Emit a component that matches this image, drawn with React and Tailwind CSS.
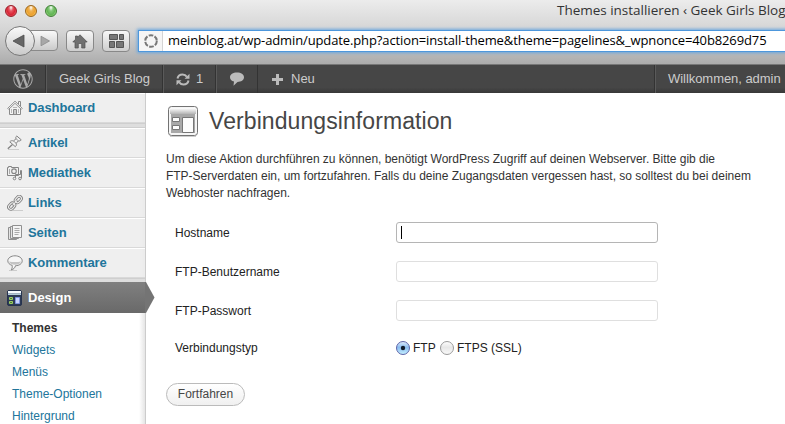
import React from "react";
import { FaWordpressSimple } from "react-icons/fa";

function HouseIcon() {
  return (
    <svg width="16" height="16" viewBox="0 0 16 16" fill="#f4f4f4" stroke="#8a8a8a">
      <path d="M2.500 8v6.500h11V8" />
      <path d="M11.500 4V1.500h2V6" />
      <path d="M.7 8.300 8 1.200l7.300 7.100-1 1L8 3.300 1.700 9.300z" strokeWidth=".9" />
      <path d="M6.500 14V9.500h3V14" fill="#ccc" />
      <path d="M4.500 9v4M11.500 9v4M6 7.500h4" strokeWidth=".8" stroke="#aaa" />
    </svg>
  );
}

function PinIcon() {
  return (
    <svg width="16" height="16" viewBox="0 0 16 16" fill="#f2f2f2" stroke="#808080">
      <path d="M1 14.500h11" stroke="#ccc" />
      <path d="M.8 13.800 5.500 9.500" strokeWidth="1.300" />
      <path d="M2.800 6.800c1-1.200 2.400-1.400 3.700-.8L9 3.700c-.5-1.200-.2-2 .8-2.700l4.400 3.800c-.8 1.200-1.700 1.400-2.800 1L9.200 8.300c.5 1.400.2 2.500-.9 3.400z" />
      <path d="m6.500 6 2.700 2.300M9 3.700l2.400 2.100" strokeWidth=".8" />
    </svg>
  );
}

function MediaIcon() {
  return (
    <svg width="16" height="16" viewBox="0 0 16 16" fill="#f0f0f0" stroke="#858585">
      <path d="M.5 2.500h1v-1h3v1h7v8H.5z" />
      <circle cx="7" cy="6.200" r="2.300" strokeWidth="1.100" />
      <path d="M2.500 4v5" stroke="#aaa" />
      <path d="M8.500 13V9.500h5V5.500h1V13" fill="none" />
      <circle cx="7.500" cy="13.500" r="1.300" />
      <circle cx="13" cy="13.500" r="1.300" />
    </svg>
  );
}

function LinkIcon() {
  return (
    <svg width="17" height="16" viewBox="0 0 17 16" fill="none">
      <path d="M6 15.500h10" stroke="#ccc" />
      <g stroke="#808080" strokeWidth="2.800">
        <rect x="7.800" y="2.200" width="7" height="4.600" rx="2.300" transform="rotate(-48 11.300 4.500)" />
        <rect x="1.200" y="8.800" width="7" height="4.600" rx="2.300" transform="rotate(-48 4.700 11.100)" />
        <path d="m5.500 10.500 5-5.500" />
      </g>
      <g stroke="#eee" strokeWidth="1.100">
        <rect x="7.800" y="2.200" width="7" height="4.600" rx="2.300" transform="rotate(-48 11.300 4.500)" />
        <rect x="1.200" y="8.800" width="7" height="4.600" rx="2.300" transform="rotate(-48 4.700 11.100)" />
        <path d="m5.500 10.500 5-5.500" />
      </g>
    </svg>
  );
}

function PagesIcon() {
  return (
    <svg width="16" height="16" viewBox="0 0 16 16" fill="#e4e4e4" stroke="#909090">
      <path d="M1.500 2.500h8v12h-8z" />
      <path d="M3.500 1.500h8v12h-8z" />
      <path d="M5.500.5h9v12h-9z" fill="#f4f4f4" />
      <path d="M7.500 3.500h5M7.500 5.500h5M7.500 7.500h5M7.500 9.500h4" stroke="#aaa" />
    </svg>
  );
}

function BubbleIcon() {
  return (
    <svg width="16" height="16" viewBox="0 0 16 16">
      <path d="M2 15.500h8" stroke="#ccc" />
      <path d="M8 .8c4 0 7.200 2.200 7.200 5 0 2.900-3 4.800-6.700 4.900-.4 2-2 3.800-4.300 4.200 1-1.200 1.200-2.700 1-4.500C2.700 9.700.8 8 .8 5.800c0-2.800 3.200-5 7.200-5z" fill="#f6f6f6" stroke="#858585" />
      <path d="M2 6.500c3 .8 9 .8 12 0-.8 2.300-3 3.300-6 3.300s-5.300-1-6-3.300z" fill="#c4c4c4" />
    </svg>
  );
}

function DesignIcon() {
  return (
    <svg width="15" height="16" viewBox="0 0 15 16">
      <rect x=".5" y=".5" width="14" height="15" rx="1.500" fill="#2d3a55" stroke="#26334f" />
      <path d="M1 1h13v2.500H1z" fill="#f5fafd" />
      <path d="M1 3.500h13V5H1z" fill="#b5cddb" />
      <path d="M2.500 7.500h3v2h-3zM2.500 11.500h3v2h-3z" fill="#4f7a3a" stroke="#9ccf63" />
      <path d="M8.500 7.500h4v6h-4z" fill="#c9d5ff" stroke="#7f95e0" />
    </svg>
  );
}

const rows = [
  ["Artikel", PinIcon],
  ["Mediathek", MediaIcon],
  ["Links", LinkIcon],
  ["Seiten", PagesIcon],
  ["Kommentare", BubbleIcon],
];

function MenuRow({ label, Icon }) {
  return (
    <div className="flex h-[30px] items-center border-t border-white border-b border-b-[#d9d9d9] pl-[7px] text-[13px] font-bold tracking-[-0.080px] text-[#21759b]">
      <span className="flex w-[21px]">
        <Icon />
      </span>
      <span className="whitespace-nowrap">{label}</span>
    </div>
  );
}

function MenuGap() {
  return <div className="h-[5px] border-t border-[#cfcfcf] border-b border-b-[#cfcfcf] bg-[#dedede]" />;
}

function Light({ tone }) {
  return <span className={"h-3 w-3 rounded-full border " + tone} />;
}

function Browser() {
  return (
    <header className="flex h-16 shrink-0 flex-col bg-linear-to-b from-[#ececec] via-[#d3d3d3] to-[#acacac] font-['Open_Sans',sans-serif]">
      <div className="flex h-[21px] items-center justify-between pl-[5px]">
        <div className="flex gap-2">
          <Light tone="border-[#981d28] bg-[radial-gradient(ellipse_at_50%_15%,#fff_0%,#e65461_30%,#d82535_60%,#ff8d94_100%)]" />
          <Light tone="border-[#9c661b] bg-[radial-gradient(ellipse_at_50%_15%,#fff_0%,#eeb254_30%,#eda12e_60%,#ffe98f_100%)]" />
          <Light tone="border-[#3f7f37] bg-[radial-gradient(ellipse_at_50%_15%,#fff_0%,#83c878_30%,#61b453_60%,#c8f7a8_100%)]" />
        </div>
        <div className="w-[228px] text-[13.500px] tracking-[-0.020px] whitespace-nowrap text-[#333]">Themes installieren ‹ Geek Girls Blog</div>
      </div>
      <div className="flex h-[40px] items-center pl-[5px]">
        <svg className="shrink-0" width="54" height="32" viewBox="0 0 54 32">
          <defs>
            <linearGradient id="nav" x2="0" y2="1">
              <stop stopColor="#fafafa" />
              <stop offset="1" stopColor="#c9c9c9" />
            </linearGradient>
          </defs>
          <path d="M24 5.500h25a3.500 3.500 0 0 1 3.500 3.500v13a3.500 3.500 0 0 1-3.500 3.500H24z" fill="url(#nav)" stroke="#8a8a8a" />
          <circle cx="15" cy="16" r="14.500" fill="url(#nav)" stroke="#777" />
          <path d="M8 16 19 10v12z" fill="#666" stroke="#4c4c4c" strokeWidth=".8" />
          <path d="M36 11.200v9.600l8.500-4.800z" fill="#a8a8a8" stroke="#8a8a8a" strokeWidth=".8" />
        </svg>
        <div className="ml-[7px] flex h-[22px] w-7 shrink-0 items-center justify-center rounded-[4px] border border-[#888] bg-linear-to-b from-[#f7f7f7] to-[#cecece]">
          <svg width="16" height="15" viewBox="0 0 16 15" fill="#707070" stroke="#505050" strokeWidth=".7">
            <path d="M8 .8 15.200 8H13v6H9.700V9.500H6.300V14H3V8H.8l2.700-2.700V2h2v1.300z" />
          </svg>
        </div>
        <div className="ml-2 flex h-[22px] w-7 shrink-0 items-center justify-center rounded-[4px] border border-[#888] bg-linear-to-b from-[#f7f7f7] to-[#cecece]">
          <svg width="15" height="14" viewBox="0 0 15 14" fill="#777" stroke="#555">
            <path d="M.5.5h8v5h-8zM10.500.5h4v5h-4zM.5 7.500h5v6h-5zM7.500 7.500h7v6h-7z" />
          </svg>
        </div>
        <div className="ml-[9px] flex h-[20px] w-[680px] shrink-0 items-center bg-white shadow-[0_0_0_1px_#4d97dc,0_0_3px_2px_#6aa7df]">
          <div className="flex h-full w-[24px] items-center justify-center border-r border-[#d4d4d4] bg-[#f5f5f5]">
            <svg width="14" height="14" viewBox="0 0 14 14" fill="none" stroke="#777" strokeWidth="2">
              <circle cx="7" cy="7" r="5.800" strokeDasharray="4.700 1.370" />
            </svg>
          </div>
          <div className="ml-[5px] text-[13px] tracking-[-0.120px] whitespace-nowrap text-black">meinblog.at/wp-admin/update.php?action=install-theme&amp;theme=pagelines&amp;_wpnonce=40b8269d75</div>
        </div>
      </div>
    </header>
  );
}

function AdminBar() {
  return (
    <nav className="flex h-[29px] shrink-0 border-t border-[#777] bg-linear-to-b from-[#464646] from-80% to-[#383838] text-[13px] text-[#ccc]">
      <div className="flex w-[46px] items-center justify-center border-r border-[#333]">
        <FaWordpressSimple size={20} color="#aaa" />
      </div>
      <div className="flex w-[117px] items-center border-r border-l border-r-[#333] border-l-[#5a5a5a] pl-3 whitespace-nowrap">Geek Girls Blog</div>
      <div className="flex w-[53px] items-center gap-[6px] border-r border-l border-r-[#333] border-l-[#5a5a5a] pl-3">
        <svg width="14" height="13" viewBox="0 0 14 13" fill="none" stroke="#bbb" strokeWidth="2">
          <path d="M1.500 5.500C2 3 4 1.500 6.500 1.500c2 0 3.400.8 4.300 2.300M12.500 7.500c-.5 2.500-2.500 4-5 4-2 0-3.400-.8-4.300-2.300" />
          <path d="M13.500.8v5h-5zM.5 12.200v-5h5z" fill="#bbb" stroke="none" />
        </svg>
        <span>1</span>
      </div>
      <div className="flex w-[42px] items-center justify-center border-r border-l border-r-[#333] border-l-[#5a5a5a]">
        <svg width="14" height="14" viewBox="0 0 14 14" fill="#bbb">
          <path d="M7 .5c4 0 7 2 7 4.800S11 10 7.500 10L3.500 13.700 4 9.600C1.500 9 0 7.400 0 5.300 0 2.500 3 .5 7 .5z" />
        </svg>
      </div>
      <div className="flex flex-1 items-center gap-2 border-r border-r-[#333] pl-[14px]">
        <svg width="11" height="11" viewBox="0 0 11 11" fill="#bbb">
          <path d="M4 0h3v4h4v3H7v4H4V7H0V4h4z" />
        </svg>
        <span>Neu</span>
      </div>
      <div className="flex w-[130px] items-center border-l border-[#5a5a5a] pl-[12px] tracking-[-0.050px] whitespace-nowrap">Willkommen, admin</div>
    </nav>
  );
}

function Sidebar() {
  return (
    <aside className="flex w-[146px] shrink-0 flex-col border-r border-[#ccc] bg-[linear-gradient(90deg,transparent_139px,rgba(0,0,0,.12)_146px)]">
      <div className="bg-[#ececec]/85">
        <MenuRow label="Dashboard" Icon={HouseIcon} />
        <MenuGap />
        {rows.map(([label, Icon]) => (
          <MenuRow key={label} label={label} Icon={Icon} />
        ))}
        <div className="h-[4px] border-t border-[#cfcfcf] bg-[#dedede]" />
      </div>
      <div className="relative flex h-[31px] shrink-0 items-center bg-linear-to-b from-[#808080] to-[#696969] pl-[7px] text-[13px] font-bold text-white">
        <span className="flex w-[21px]">
          <DesignIcon />
        </span>
        <span>Design</span>
        <svg className="absolute top-0 left-[145px]" width="10" height="31" viewBox="0 0 10 31">
          <path d="M0 0h1l8.500 15.500L1 31H0z" fill="#747474" />
        </svg>
      </div>
      <div className="flex flex-col pt-1 pl-3 text-[12px] leading-[22px] whitespace-nowrap text-[#21759b]">
        <span className="font-bold text-[#333]">Themes</span>
        <span>Widgets</span>
        <span>Menüs</span>
        <span>Theme-Optionen</span>
        <span>Hintergrund</span>
      </div>
    </aside>
  );
}

function Field({ label, focused }) {
  return (
    <div className="flex h-[39px] items-center">
      <label className="w-[221px]">{label}</label>
      <div className={"flex h-[21px] w-[262px] items-center rounded-[3px] border bg-white pl-1 " + (focused ? "border-[#b5b5b5]" : "border-[#dfdfdf]")}>
        {focused && <span className="h-[13px] w-px bg-black" />}
      </div>
    </div>
  );
}

function Radio({ on }) {
  return (
    <svg width="14" height="14" viewBox="0 0 14 14">
      <defs>
        <linearGradient id={on ? "ron" : "roff"} x2="0" y2="1">
          <stop stopColor={on ? "#e1edfc" : "#fff"} />
          <stop offset=".45" stopColor={on ? "#8abcf0" : "#e7e7e7"} />
          <stop offset="1" stopColor={on ? "#c6f1ff" : "#fafafa"} />
        </linearGradient>
      </defs>
      <circle cx="7" cy="7" r="6.500" fill={on ? "url(#ron)" : "url(#roff)"} stroke={on ? "#5e64a8" : "#9a9a9a"} />
      {on && <circle cx="7" cy="7" r="2.200" fill="#101a2c" />}
    </svg>
  );
}

function Content() {
  return (
    <main className="min-w-0 flex-1 pl-5 text-[12px] text-[#333]">
      <div className="flex h-14 items-center">
        <svg width="30" height="31" viewBox="0 0 30 31" className="ml-[2px]">
          <defs>
            <linearGradient id="win" x2="0" y2="1">
              <stop stopColor="#fff" />
              <stop offset="1" stopColor="#b5b5b5" />
            </linearGradient>
          </defs>
          <rect x=".5" y=".5" width="29" height="29" rx="3" fill="#f5f5f5" stroke="#737373" />
          <path d="M2 2h26v6H2z" fill="url(#win)" />
          <path d="M3 8h24v19H3z" fill="#a8a8a8" />
          <path d="M4.500 11.500h7v4h-7zM4.500 19.500h7v4h-7zM14.500 11.500h11v15h-11z" fill="#fcfcfc" stroke="#777" />
          <path d="M2 30.500h26" stroke="#ccc" />
        </svg>
        <h1 className="ml-[11px] text-[23px] tracking-[0.080px] whitespace-nowrap text-[#464646]">Verbindungsinformation</h1>
      </div>
      <p className="pt-0.5 text-[12px] leading-[17px] tracking-[-0.020px] whitespace-nowrap">
        Um diese Aktion durchführen zu können, benötigt WordPress Zugriff auf deinen Webserver. Bitte gib die
        <br />
        FTP-Serverdaten ein, um fortzufahren. Falls du deine Zugangsdaten vergessen hast, so solltest du bei deinem
        <br />
        Webhoster nachfragen.
      </p>
      <form className="mt-[11px] pl-[9px] text-[#222]">
        <Field label="Hostname" focused />
        <Field label="FTP-Benutzername" />
        <Field label="FTP-Passwort" />
        <div className="flex h-[36px] items-center">
          <span className="w-[221px]">Verbindungstyp</span>
          <Radio on />
          <span className="ml-[3px] w-[27px] whitespace-nowrap">FTP</span>
          <Radio />
          <span className="ml-[3px] whitespace-nowrap">FTPS (SSL)</span>
        </div>
      </form>
      <button className="mt-[17px] flex h-[23px] w-[79px] items-center justify-center rounded-full border border-[#bbb] bg-linear-to-b from-white to-[#f0f0f0] pb-px text-[#464646]">Fortfahren</button>
    </main>
  );
}

export default function App() {
  return (
    <div className="flex h-[424px] w-[785px] flex-col overflow-hidden bg-white font-['Liberation_Sans',Arial,sans-serif]">
      <Browser />
      <AdminBar />
      <div className="flex min-h-0 flex-1">
        <Sidebar />
        <Content />
      </div>
    </div>
  );
}
